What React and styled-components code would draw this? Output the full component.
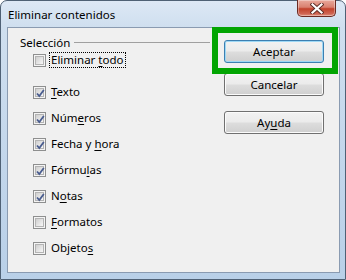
import React from "react";
import styled, { createGlobalStyle } from "styled-components";

const Global = createGlobalStyle`
  html, body { margin: 0; padding: 0; background: #ffffff; }
  body { font-family: "Noto Sans", "DejaVu Sans", sans-serif; }
`;

const Frame = styled.div`
  position: relative;
  width: 346px;
  height: 280px;
  box-sizing: border-box;
  border: 1px solid #4f6175;
  border-radius: 7px 7px 0 0;
  padding: 0 5px 6px 6px;
  display: flex;
  flex-direction: column;
  background: linear-gradient(180deg, #dde8f5 0px, #cfdfef 26px, #c2d6eb 60%, #b9d0e8 100%);
`;

const TitleBar = styled.div`
  height: 26px;
  display: flex;
  align-items: center;
  justify-content: space-between;
  padding-left: 1px;
`;

const Title = styled.span`
  font-size: 11.5px;
  color: #000;
`;

const CloseButton = styled.div`
  align-self: flex-start;
  margin-top: -1px;
  margin-right: 4px;
  width: 39px;
  height: 17px;
  box-sizing: border-box;
  border: 1px solid #6b2a22;
  border-top: none;
  border-radius: 0 0 5px 5px;
  background: linear-gradient(180deg, #e9a99c 0%, #d9806f 45%, #c2412b 55%, #cf6452 85%, #e0907f 100%);
  box-shadow: inset 0 0 0 1px rgba(255, 255, 255, 0.35);
  display: flex;
  align-items: center;
  justify-content: center;
`;

const Client = styled.div`
  flex: 1;
  display: flex;
  background: #f0f0f0;
  border: 1px solid #8a9bb1;
`;

const Options = styled.div`
  width: 202px;
  padding: 6px 0 0 12px;
  box-sizing: border-box;
  display: flex;
  flex-direction: column;
`;

const Header = styled.div`
  height: 16px;
  display: flex;
  align-items: center;
  gap: 4px;
  font-size: 11.5px;
`;

const Rule = styled.div`
  flex: 1;
  height: 1px;
  background: #a0a0a0;
  margin-top: 1px;
`;

const List = styled.div`
  display: flex;
  flex-direction: column;
  gap: 6px;
  padding-left: 13px;
`;

const Row = styled.label`
  height: 20px;
  display: flex;
  align-items: center;
  gap: 3px;
  font-size: 11.5px;
  color: #000;
  margin-bottom: ${(p) => (p.$spaced ? "6px" : "0")};
`;

const Box = styled.span`
  width: 13px;
  height: 13px;
  box-sizing: border-box;
  border: 1px solid #8e8f8f;
  background: #f4f4f4;
  padding: 1px;
  display: flex;
  position: relative;
`;

const BoxInner = styled.span`
  flex: 1;
  background: linear-gradient(135deg, #cfcfcf 0%, #e3e3e3 50%, #f7f7f7 100%);
  border: 1px solid #b4b4b4;
`;

const Mark = styled.svg`
  position: absolute;
  left: 1px;
  top: 1px;
`;

const Text = styled.span`
  padding: 0 1px;
  line-height: 14px;
  border: 1px dotted ${(p) => (p.$focused ? "#000" : "transparent")};
`;

const Key = styled.u`
  text-decoration: underline;
  text-underline-offset: 2px;
`;

const Actions = styled.div`
  margin-left: 14px;
  width: 100px;
  padding-top: 12px;
  display: flex;
  flex-direction: column;
`;

const Button = styled.button`
  width: 100px;
  height: 23px;
  padding: 0;
  margin-top: ${(p) => p.$gap || 0}px;
  font-family: "Noto Sans", "DejaVu Sans", sans-serif;
  font-size: 11.5px;
  color: #000;
  border: 1px solid ${(p) => (p.$primary ? "#3c7fb1" : "#707070")};
  border-radius: 3px;
  background: linear-gradient(180deg, #f2f2f2 0%, #ebebeb 48%, #dddddd 52%, #cfcfcf 100%);
  box-shadow: inset 0 0 0 1px ${(p) => (p.$primary ? "#9ed8f5" : "#fbfbfb")};
`;

const Highlight = styled.div`
  position: absolute;
  left: 211px;
  top: 26px;
  width: 126px;
  height: 47px;
  box-sizing: border-box;
  border: 6px solid #02a502;
  pointer-events: none;
`;

const Check = ({ checked }) => (
  <Box>
    <BoxInner />
    {checked && (
      <Mark width="11" height="11" viewBox="0 0 11 11">
        <path d="M2 5.5 L4.3 8 L8.8 2" fill="none" stroke="#4a5d8f" strokeWidth="1.8" />
      </Mark>
    )}
  </Box>
);

const items = [
  { pre: "Eliminar ", key: "t", post: "odo", checked: false, focused: true, spaced: true },
  { pre: "", key: "T", post: "exto", checked: true },
  { pre: "Núm", key: "e", post: "ros", checked: true },
  { pre: "Fecha y ", key: "h", post: "ora", checked: true },
  { pre: "Fórmu", key: "l", post: "as", checked: true },
  { pre: "N", key: "o", post: "tas", checked: true },
  { pre: "", key: "F", post: "ormatos", checked: false },
  { pre: "Objeto", key: "s", post: "", checked: false },
];

export default function App() {
  return (
    <>
      <Global />
      <Frame>
        <TitleBar>
          <Title>Eliminar contenidos</Title>
          <CloseButton>
            <svg width="14" height="11" viewBox="0 0 14 11">
              <path d="M2.5 1.5 L11.5 9.5 M11.5 1.5 L2.5 9.5" stroke="#5a2b25" strokeWidth="4" strokeLinecap="square" />
              <path d="M2.5 1.5 L11.5 9.5 M11.5 1.5 L2.5 9.5" stroke="#ffffff" strokeWidth="2.2" strokeLinecap="square" />
            </svg>
          </CloseButton>
        </TitleBar>
        <Client>
          <Options>
            <Header>
              <span>Selección</span>
              <Rule />
            </Header>
            <List>
              {items.map((it, i) => (
                <Row key={i} $spaced={it.spaced}>
                  <Check checked={it.checked} />
                  <Text $focused={it.focused}>
                    {it.pre}
                    <Key>{it.key}</Key>
                    {it.post}
                  </Text>
                </Row>
              ))}
            </List>
          </Options>
          <Actions>
            <Button $primary>Aceptar</Button>
            <Button $gap={10}>Cancelar</Button>
            <Button $gap={15}>
              Ay<Key>u</Key>da
            </Button>
          </Actions>
        </Client>
        <Highlight />
      </Frame>
    </>
  );
}
